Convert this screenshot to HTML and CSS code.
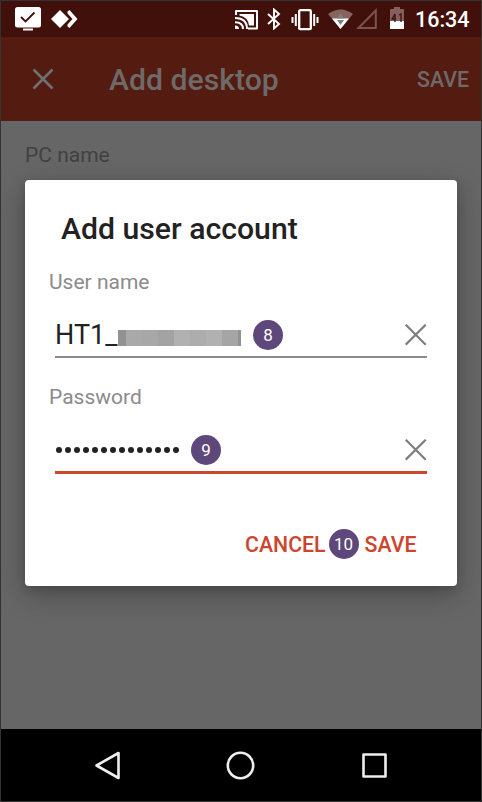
FILE: index.html
```
<!DOCTYPE html>
<html lang="en">
<head>
<meta charset="utf-8">
<title>Add desktop</title>
<link rel="stylesheet" href="styles.css">
</head>
<body>
<div class="phone">
  <header class="status">
    <svg class="st-monitor" width="28" height="26" viewBox="0 0 28 26"><rect x="1" y="1" width="26" height="20.5" rx="2.500" fill="#fff"/><path d="M7 11l4.500 4.500L20.500 6.500" fill="none" stroke="#42100b" stroke-width="1.800"/><path d="M9 23.500h10" stroke="#fff" stroke-width="2"/></svg>
    <svg class="st-diamond" width="28" height="20" viewBox="0 0 28 20"><path d="M0 10l9-9 9 9-9 9z" fill="#fff"/><path d="M16.500 2.500l2-1.500 8 9-8 9-2-1.500v-2l5-5.500-5-5.500z" fill="#fff"/></svg>
    <span class="spacer"></span>
    <svg class="st-cast" width="24" height="20" viewBox="0 0 24 20"><path d="M1 5V1h21v17.500h-9" fill="none" stroke="#fff" stroke-width="2" stroke-linejoin="round"/><path d="M4.500 4H19v11.500h-5Q13 7 4.500 5.500z" fill="#fff"/><path d="M0 8Q12 8 12 19M0 12.200Q8 12.200 8 19" fill="none" stroke="#fff" stroke-width="2"/><path d="M0 15.500V19h4q0-3.500-4-3.500" fill="#fff"/></svg>
    <svg class="st-bt" width="14" height="22" viewBox="0 0 14 22"><path d="M1 6l11 10-5 4.500V1.500L12 6 1 16" fill="none" stroke="#fff" stroke-width="1.900"/></svg>
    <svg class="st-vibrate" width="28" height="22" viewBox="0 0 28 22"><rect x="8.200" y="1.200" width="11.600" height="19" rx="1" fill="none" stroke="#fff" stroke-width="2.300"/><path d="M4.800 5v12M23.200 5v12M1.500 8v6M26.500 8v6" stroke="#fff" stroke-width="2"/></svg>
    <svg class="st-wifi" width="27" height="22" viewBox="0 0 27 22"><path d="M1 6Q13.500-3 26 6L13.500 21z" fill="#86635f"/><path d="M5 10.500h17L13.500 21z" fill="#fff"/><path d="M13.500 5l3.500 5.500h-7zM10 12h7l-3.500 5z" fill="#7f7f7f"/></svg>
    <svg class="st-signal" width="22" height="22" viewBox="0 0 22 22"><path d="M2.500 21L19.800 3.500V21z" fill="none" stroke="#79544f" stroke-width="2"/></svg>
    <svg class="st-battery" width="14" height="22" viewBox="0 0 14 22"><path d="M4 0h6v2h3q1 0 1 1v11H0V3q0-1 1-1h3z" fill="#855f5b"/><path d="M0 14h14v8H0z" fill="#fff"/><path d="M5 7v8M1.500 12H6M2 12l3-5M9 8l2-1v8" fill="none" stroke="#42100b" stroke-width="1.300"/></svg>
    <span class="clock">16:34</span>
  </header>
  <div class="appbar">
    <svg class="close" width="22" height="22" viewBox="0 0 22 22"><path d="M1.500 1.500l19 19M20.500 1.500l-19 19" stroke="#707070" stroke-width="2.600"/></svg>
    <h1 class="title">Add desktop</h1>
    <span class="save">SAVE</span>
  </div>
  <main class="page">
    <div class="pc">PC name</div>
    <section class="dialog">
      <h2 class="heading">Add user account</h2>
      <div class="label">User name</div>
      <div class="field">
        <span class="value">HT1_</span><span class="mask"></span><span class="badge">8</span>
        <svg class="clear" width="22" height="22" viewBox="0 0 22 22"><path d="M.7 .7l20 20M20.700 .7l-20 20" stroke="#7e7e7e" stroke-width="2.200"/></svg>
      </div>
      <div class="label second">Password</div>
      <div class="field active">
        <span class="dots"><i></i><i></i><i></i><i></i><i></i><i></i><i></i><i></i><i></i><i></i><i></i><i></i><i></i><i></i></span><span class="badge">9</span>
        <svg class="clear" width="22" height="22" viewBox="0 0 22 22"><path d="M.7 .7l20 20M20.700 .7l-20 20" stroke="#7e7e7e" stroke-width="2.200"/></svg>
      </div>
      <div class="actions"><span class="action cancel">CANCEL</span><span class="badge ten">10</span><span class="action ok">SAVE</span></div>
    </section>
  </main>
  <nav class="nav">
    <svg width="30" height="30" viewBox="0 0 30 30"><path d="M26.500 3v25L4.500 15.500z" fill="none" stroke="#eee" stroke-width="2.600" stroke-linejoin="round"/></svg>
    <svg width="30" height="30" viewBox="0 0 30 30"><circle cx="14.500" cy="15.500" r="12.700" fill="none" stroke="#eee" stroke-width="2.600"/></svg>
    <svg width="30" height="30" viewBox="0 0 30 30"><rect x="3.500" y="4.500" width="22" height="22" fill="none" stroke="#eee" stroke-width="2.600" stroke-linejoin="round"/></svg>
  </nav>
</div>
</body>
</html>
```
FILE: styles.css
```
* { box-sizing: border-box; }
body { margin: 0; font-family: Roboto, sans-serif; }
.phone { width: 482px; height: 802px; border: 1px solid #333; display: flex; flex-direction: column; overflow: hidden; }
svg { display: block; flex: none; }
.status { height: 36px; background: #42100b; display: flex; align-items: flex-start; padding: 0 12px 0 13px; flex: none; }
.spacer { flex: 1; }
.st-monitor { margin-top: 5px; }
.st-diamond { margin: 8px 0 0 9px; }
.st-cast { margin: 9px 8px 0 0; }
.st-bt { margin: 7px 10px 0 0; }
.st-vibrate { margin: 8px 8px 0 0; }
.st-wifi { margin: 7px 2px 0 0; }
.st-signal { margin: 6px 12px 0 0; }
.st-battery { margin: 6px 11px 0 0; }
.clock { width: 54px; color: #fff; font-size: 21.5px; font-weight: 500; line-height: 38px; white-space: nowrap; }
.appbar { height: 84px; background: #541b10; display: flex; align-items: center; padding: 0 12px 0 31px; color: #6d6a69; flex: none; }
.title { margin: 1px 0 0 55px; font-size: 30.2px; font-weight: 500; line-height: 36px; }
.save { margin: 1px 0 0 auto; font-size: 21.3px; font-weight: 500; }
.page { height: 608px; flex: none; background: #666; position: relative; padding: 21px 0 0 24px; }
.pc { color: #414141; font-size: 21px; line-height: 26px; }
.dialog { position: absolute; left: 24px; top: 59px; width: 432px; height: 406px; border-radius: 4px; background: #fff; box-shadow: 0 9px 28px rgba(0,0,0,.27), 0 3px 8px rgba(0,0,0,.14); padding: 30px 30px 0; }
.heading { margin: 0 0 0 6px; color: #222; font-size: 30.2px; font-weight: 500; line-height: 38px; }
.label { margin: 21px 0 0 -6px; color: #8b8b8b; font-size: 21px; line-height: 26px; }
.field { height: 63px; border-bottom: 2px solid #8b8b8b; display: flex; align-items: center; padding-top: 18px; }
.value { color: #222; font-size: 27px; line-height: 32px; width: 63px; white-space: nowrap; padding-top: 1px; }
.mask { width: 123px; height: 16px; margin-top: 6px; background: linear-gradient(90deg, #929292 8px, #a9a9a9 8px 24px, #a7a7a7 24px 40px, #a3a3a3 40px 56px, #b1b1b1 56px 72px, #adadad 72px 88px, #b1b1b1 88px 104px, #a5a5a5 104px 120px, #929292 120px); }
.badge { width: 30px; height: 30px; border-radius: 50%; background: #5e477a; color: #fff; font-size: 17px; line-height: 30px; text-align: center; margin-left: 12px; flex: none; }
.clear { margin-left: auto; }
.second { margin-top: 26px; }
.active { height: 64px; border-bottom: 3px solid #cb462c; }
.dots { display: flex; gap: 3px; margin-left: 1px; }
.dots i { width: 6px; height: 6px; border-radius: 50%; background: #222; }
.active .badge { margin-left: 12px; }
.actions { display: flex; align-items: center; margin-top: 54px; padding-left: 190px; height: 32px; }
.action { color: #cb462c; font-size: 21.3px; font-weight: 500; white-space: nowrap; padding-top: 1px; }
.cancel { width: 80px; }
.actions .ten { margin: 0 6px 0 3.500px; }
.nav { height: 72px; flex: none; background: #000; display: flex; justify-content: center; align-items: center; gap: 104px; }
```
